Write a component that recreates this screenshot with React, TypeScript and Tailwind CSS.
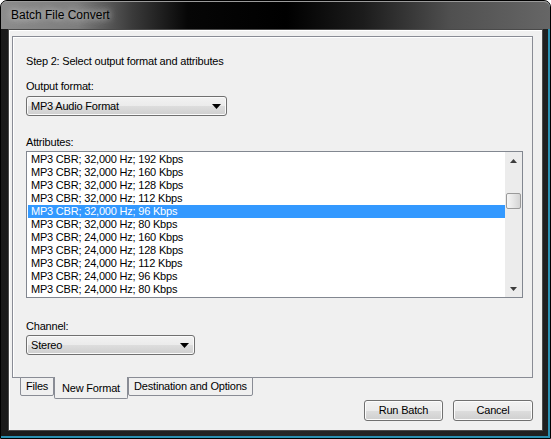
import React from 'react'

const rows = [
  'MP3 CBR; 32,000 Hz; 192 Kbps',
  'MP3 CBR; 32,000 Hz; 160 Kbps',
  'MP3 CBR; 32,000 Hz; 128 Kbps',
  'MP3 CBR; 32,000 Hz; 112 Kbps',
  'MP3 CBR; 32,000 Hz; 96 Kbps',
  'MP3 CBR; 32,000 Hz; 80 Kbps',
  'MP3 CBR; 24,000 Hz; 160 Kbps',
  'MP3 CBR; 24,000 Hz; 128 Kbps',
  'MP3 CBR; 24,000 Hz; 112 Kbps',
  'MP3 CBR; 24,000 Hz; 96 Kbps',
  'MP3 CBR; 24,000 Hz; 80 Kbps',
]

function Arrow() {
  return (
    <svg width="9" height="5" viewBox="0 0 9 5" className="shrink-0">
      <path d="M0 0h9L4.5 5z" fill="#000" />
    </svg>
  )
}

function Combo({ value, width }: { value: string; width: string }) {
  return (
    <div
      className={`${width} flex h-[20px] items-center justify-between rounded-[3px] border border-[#707070] bg-[linear-gradient(#f2f2f2_0%,#ebebeb_50%,#dddddd_51%,#cfcfcf_100%)] pl-[4px] pr-[5px] shadow-[inset_0_0_0_1px_#fafafa]`}
    >
      <span>{value}</span>
      <Arrow />
    </div>
  )
}

function Button({ label, width }: { label: string; width: string }) {
  return (
    <div
      className={`${width} flex h-[21px] items-center justify-center rounded-[3px] border border-[#707070] bg-[linear-gradient(#f2f2f2_0%,#ebebeb_50%,#dddddd_51%,#cfcfcf_100%)] shadow-[inset_0_0_0_1px_#fcfcfc]`}
    >
      {label}
    </div>
  )
}

function ScrollBar() {
  return (
    <div className="flex w-[17px] flex-col bg-[#ececec]">
      <div className="flex h-[17px] items-center justify-center">
        <svg width="7" height="4" viewBox="0 0 7 4">
          <path d="M0 4L3.5 0 7 4z" fill="#3c3c3c" />
        </svg>
      </div>
      <div className="h-[24px]" />
      <div className="mx-[1px] h-[16px] rounded-[2px] border border-[#9a9a9a] bg-[linear-gradient(90deg,#f6f6f6,#e6e6e6_50%,#d4d4d4)]" />
      <div className="flex-1" />
      <div className="flex h-[17px] items-center justify-center">
        <svg width="7" height="4" viewBox="0 0 7 4">
          <path d="M0 0h7L3.5 4z" fill="#3c3c3c" />
        </svg>
      </div>
    </div>
  )
}

export default function App() {
  return (
    <div className="h-[439px] w-[551px] overflow-hidden bg-white font-['Liberation_Sans',Arial,sans-serif] text-[11px] leading-[13px] tracking-[-0.2px] text-black">
      <div className="flex h-full w-full flex-col rounded-t-[7px] border border-black bg-[linear-gradient(90deg,#1a1a1a,#262626_50%,#202020)] shadow-[inset_-2px_-2px_0_#2a8fb0]">
        {/* title bar */}
        <div className="flex h-[28px] items-center rounded-t-[6px] bg-[linear-gradient(90deg,#8c8c8c_0%,#7d7d7d_14%,#3a3a3a_24%,#060606_34%,#000_52%,#1c1c1c_66%,#505050_82%,#666_100%)] pl-[10px] shadow-[inset_0_1px_0_#9a9a9a]">
          <span className="text-[12px] tracking-normal text-black [text-shadow:0_0_6px_#c8c8c8,0_0_10px_#bdbdbd]">
            Batch File Convert
          </span>
        </div>
        <div className="flex flex-1 px-[7px] pb-[7px]">
          {/* client */}
          <div className="flex flex-1 flex-col border border-[#4a4a4a] bg-[#f0f0f0] pl-[3px] pr-[9px] pt-[6px] shadow-[inset_1px_1px_0_#ffffff]">
            {/* tab page */}
            <div className="flex h-[342px] flex-col border border-[#898c95] bg-[#f0f0f0] pl-[13px] pt-[18px] shadow-[inset_1px_1px_0_#fff]">
              <div>Step 2: Select output format and attributes</div>
              <div className="mt-[12px]">Output format:</div>
              <div className="mt-[3px]">
                <Combo value="MP3 Audio Format" width="w-[201px]" />
              </div>
              <div className="mt-[20px]">Attributes:</div>
              <div className="mt-[2px] flex h-[147px] w-[497px] border border-[#828790] bg-white">
                <div className="flex-1 pl-[1px] pt-[1px]">
                  {rows.map((r, i) => (
                    <div
                      key={i}
                      className={`h-[13px] pl-[3px] ${i === 4 ? 'bg-[#3399ff] text-white' : ''}`}
                    >
                      {r}
                    </div>
                  ))}
                </div>
                <ScrollBar />
              </div>
              <div className="mt-[22px]">Channel:</div>
              <div className="mt-[2px]">
                <Combo value="Stereo" width="w-[169px]" />
              </div>
            </div>
            {/* tabs */}
            <div className="flex h-[22px] items-start pl-[8px]">
              <div className="-mt-px flex h-[19px] w-[34px] items-center justify-center rounded-b-[2px] border border-[#898c95] bg-[#f0f0f0]">
                Files
              </div>
              <div className="-mt-px flex h-[22px] w-[74px] items-center justify-center rounded-b-[2px] border border-t-0 border-[#898c95] bg-[#f0f0f0] pt-[2px]">
                New Format
              </div>
              <div className="-mt-px flex h-[19px] w-[125px] items-center justify-center rounded-b-[2px] border border-[#898c95] bg-[#f0f0f0]">
                Destination and Options
              </div>
            </div>
            <div className="flex justify-end gap-[10px]">
              <Button label="Run Batch" width="w-[79px]" />
              <Button label="Cancel" width="w-[80px]" />
            </div>
          </div>
        </div>
      </div>
    </div>
  )
}
